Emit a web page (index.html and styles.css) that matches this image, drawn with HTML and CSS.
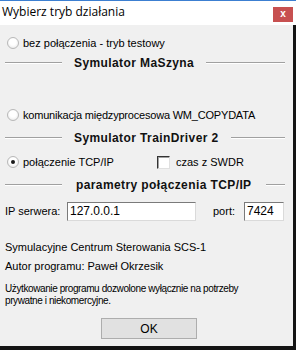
FILE: index.html
```html
<!DOCTYPE html>
<html lang="pl">
<head>
  <meta charset="UTF-8" />
  <title>Wybierz tryb działania</title>
  <link rel="stylesheet" href="styles.css">
</head>
<body>
  <div class="window">
    <div class="titlebar">
      <span class="title">Wybierz tryb działania</span>
      <span class="close">x</span>
    </div>

    <div class="client">
      <label class="row radio-row first">
        <span class="radio"></span>
        <span>bez połączenia - tryb testowy</span>
      </label>

      <div class="divider"><span>Symulator MaSzyna</span></div>

      <label class="row radio-row wm">
        <span class="radio"></span>
        <span class="tight-text">komunikacja międzyprocesowa WM_COPYDATA</span>
      </label>

      <div class="divider tight"><span>Symulator TrainDriver 2</span></div>

      <div class="row radio-row tcp">
        <label class="option tcp-option">
          <span class="radio checked"></span>
          <span>połączenie TCP/IP</span>
        </label>
        <label class="option swdr">
          <span class="checkbox"></span>
          <span>czas z SWDR</span>
        </label>
      </div>

      <div class="divider tight params"><span>parametry połączenia TCP/IP</span></div>

      <div class="row fields">
        <span class="label-ip">IP serwera:</span>
        <span class="field ip">127.0.0.1</span>
        <span class="label-port">port:</span>
        <span class="field port">7424</span>
      </div>

      <p class="info first-info">Symulacyjne Centrum Sterowania SCS-1</p>
      <p class="info">Autor programu: Paweł Okrzesik</p>

      <p class="note">Użytkowanie programu dozwolone wyłącznie na potrzeby<br>prywatne i niekomercyjne.</p>

      <div class="buttons">
        <button class="ok">OK</button>
      </div>
    </div>
  </div>
</body>
</html>
```

FILE: styles.css
```css
* {
  box-sizing: border-box;
  margin: 0;
  padding: 0;
}

body {
  width: 296px;
  height: 350px;
  background: #141414;
  overflow: hidden;
  font-family: 'Liberation Sans', Arial, sans-serif;
  font-size: 11px;
  color: #000;
  white-space: nowrap;
}

.window {
  width: 293px;
  height: 346px;
  background: #f0f0f0;
  display: flex;
  flex-direction: column;
}

.titlebar {
  height: 25px;
  background: #fff;
  border-top: 1px solid #3c7fd1;
  display: flex;
  justify-content: space-between;
  align-items: flex-start;
  padding-left: 2px;
  width: 296px;
}

.title {
  font-family: 'Open Sans', 'Liberation Sans', sans-serif;
  font-size: 12px;
  line-height: 20px;
  margin-top: 1px;
}

.close {
  width: 20px;
  height: 15px;
  margin-top: 6px;
  margin-right: 3px;
  background: #c75050;
  color: #fff;
  font-weight: bold;
  font-size: 10px;
  line-height: 14px;
  text-align: center;
}

.client {
  display: flex;
  flex-direction: column;
  padding: 0 8px 0 5px;
}

.row {
  height: 20px;
  display: flex;
  align-items: center;
}

.radio-row {
  padding-left: 2px;
  gap: 4px;
}

.tight-text {
  letter-spacing: -0.2px;
}

.first {
  margin-top: 8px;
}

.wm {
  margin-top: 32px;
}

.tcp {
  margin-top: 4px;
  gap: 0;
}

.option {
  display: flex;
  align-items: center;
  gap: 4px;
}

.tcp-option {
  width: 150px;
}

.swdr {
  gap: 6px;
}

.radio {
  width: 12px;
  height: 12px;
  border-radius: 50%;
  border: 1px solid #b8b8b8;
  background: radial-gradient(circle at 50% 40%, #fff 40%, #e2e2e2 100%);
  display: flex;
  align-items: center;
  justify-content: center;
  flex: 0 0 auto;
}

.radio.checked::after {
  content: "";
  width: 4px;
  height: 4px;
  border-radius: 50%;
  background: #1a1a1a;
}

.checkbox {
  width: 13px;
  height: 13px;
  border: 1px solid #333;
  border-right-color: #e0e0e0;
  border-bottom-color: #e0e0e0;
  background: #fff;
  box-shadow: inset 1px 1px 0 #a0a0a0;
}

.divider {
  height: 20px;
  display: flex;
  align-items: center;
  gap: 12px;
  font-size: 12px;
  letter-spacing: 0.4px;
  font-weight: bold;
  color: #111;
}

.divider.tight {
  margin-top: 3px;
}

.divider.params {
  gap: 14px;
}

.divider::before,
.divider::after {
  content: "";
  height: 1px;
  background: #a0a0a0;
  border-bottom: 1px solid #fff;
  box-sizing: content-box;
}

.divider::before {
  width: 57px;
}

.divider::after {
  flex: 1;
}

.fields {
  margin-top: 6px;
}

.label-ip {
  width: 62px;
}

.field {
  height: 19px;
  background: #fff;
  border: 1px solid #7a7a7a;
  border-right-color: #dadada;
  border-bottom-color: #dadada;
  padding-left: 2px;
  line-height: 17px;
  font-size: 12px;
}

.ip {
  width: 129px;
}

.label-port {
  width: 31px;
  margin-left: 17px;
}

.port {
  width: 40px;
}

.info {
  height: 19px;
  line-height: 19px;
}

.first-info {
  margin-top: 17px;
}

.note {
  margin-top: 7px;
  font-size: 10px;
  line-height: 12px;
  letter-spacing: -0.4px;
}

.buttons {
  display: flex;
  margin-top: 11px;
  padding-left: 96px;
}

.ok {
  width: 96px;
  height: 21px;
  background: #e1e1e1;
  border: 1px solid #adadad;
  font-family: 'Liberation Sans', Arial, sans-serif;
  font-size: 12px;
}
```
